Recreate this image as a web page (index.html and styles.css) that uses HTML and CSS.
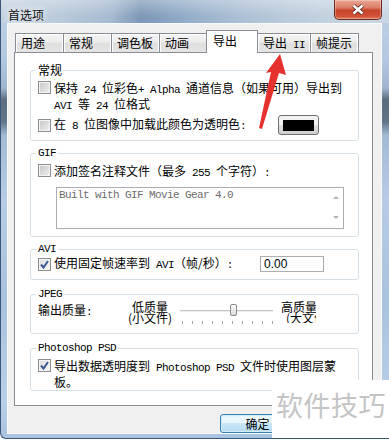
FILE: index.html
```html
<!DOCTYPE html>
<html lang="zh-CN">
<head>
  <meta charset="UTF-8">
  <meta name="viewport" content="width=device-width, initial-scale=1.0">
  <title>首选项</title>
  <link rel="stylesheet" href="styles.css">
</head>
<body>
  <div class="window">
    <div class="titlebar">
      <span class="title">首选项</span>
      <button class="close" aria-label="关闭">
        <svg width="14" height="11" viewBox="0 0 14 11">
          <path d="M2.5 1.5 L11.5 9.5 M11.5 1.5 L2.5 9.5" stroke="#5a2a22" stroke-width="4.2"/>
          <path d="M2.5 1.5 L11.5 9.5 M11.5 1.5 L2.5 9.5" stroke="#fff" stroke-width="2.4"/>
        </svg>
      </button>
    </div>

    <div class="client">
      <div class="tabs">
        <div class="tab">用途</div>
        <div class="tab">常规</div>
        <div class="tab">调色板</div>
        <div class="tab">动画</div>
        <div class="tab active">导出</div>
        <div class="tab">导出<span class="en"> II</span></div>
        <div class="tab">帧提示</div>
      </div>

      <div class="panel">
        <fieldset class="group">
          <legend>常规</legend>
          <div class="check-row">
            <span class="check"></span>
            <span>保持<span class="en"> 24 </span>位彩色<span class="en">+ Alpha </span>通道信息（如果可用）导出到<br><span class="en">AVI </span>等<span class="en"> 24 </span>位格式</span>
          </div>
          <div class="check-row center">
            <span class="check"></span>
            <span>在<span class="en"> 8 </span>位图像中加载此颜色为透明色<span class="en">:</span></span>
            <button class="swatch"><span></span></button>
          </div>
        </fieldset>

        <fieldset class="group group-gif">
          <legend class="en">GIF</legend>
          <div class="check-row">
            <span class="check"></span>
            <span>添加签名注释文件（最多<span class="en"> 255 </span>个字符）<span class="en">:</span></span>
          </div>
          <div class="memo">
            <div class="memo-text en">Built with GIF Movie Gear 4.0</div>
            <div class="memo-scroll">
              <i class="arr-up"></i>
              <i class="arr-down"></i>
            </div>
          </div>
        </fieldset>

        <fieldset class="group group-avi">
          <legend class="en">AVI</legend>
          <div class="check-row center">
            <span class="check on">
              <svg width="11" height="11" viewBox="0 0 11 11"><path d="M2 5.5 L4.5 8.5 L9 2" fill="none" stroke="#3d5a98" stroke-width="2"/></svg>
            </span>
            <span>使用固定帧速率到<span class="en"> AVI</span>（帧/秒）<span class="en">:</span></span>
            <input class="num" type="text" value="0.00">
          </div>
        </fieldset>

        <fieldset class="group group-jpeg">
          <legend class="en">JPEG</legend>
          <div class="quality">
            <span class="quality-title">输出质量<span class="en">:</span></span>
            <span class="level">低质量<br>(小文件)</span>
            <div class="slider">
              <div class="track"></div>
              <div class="ticks">
                <i></i><i></i><i></i><i></i><i></i><i></i><i></i><i></i><i></i><i></i>
              </div>
              <span class="thumb"></span>
            </div>
            <span class="level level-high">高质量<br><span class="sub">(大文件)</span></span>
          </div>
        </fieldset>

        <fieldset class="group group-psd">
          <legend class="en">Photoshop PSD</legend>
          <div class="check-row">
            <span class="check on">
              <svg width="11" height="11" viewBox="0 0 11 11"><path d="M2 5.5 L4.5 8.5 L9 2" fill="none" stroke="#3d5a98" stroke-width="2"/></svg>
            </span>
            <span>导出数据透明度到<span class="en"> Photoshop PSD </span>文件时使用图层蒙<br>板。</span>
          </div>
        </fieldset>
      </div>

      <div class="actions">
        <button class="btn default">确定</button>
        <button class="btn">取消</button>
      </div>
    </div>

    <div class="watermark">软件技巧</div>

    <svg class="arrow" width="389" height="441" viewBox="0 0 389 441">
      <polygon points="280,54 286,75 279,73 262,129 259,128 271,72 266,73" fill="#e5322f"/>
    </svg>
  </div>
</body>
</html>
```

FILE: styles.css
```css
* {
  box-sizing: border-box;
}

body {
  margin: 0;
  background: #fff;
  font-family: "Noto Sans CJK SC", "Noto Sans", sans-serif;
  font-size: 12px;
  color: #000;
}

.en {
  font-family: "Liberation Mono", monospace;
  font-size: 11px;
  letter-spacing: -0.6px;
}

/* window frame */

.window {
  position: relative;
  width: 389px;
  height: 439px;
  display: flex;
  flex-direction: column;
  padding: 0 7px 6px 6px;
  border-left: 1px solid #3b5779;
  border-bottom: 1px solid #3b5779;
  border-bottom-left-radius: 6px;
  overflow: hidden;
  background: linear-gradient(to bottom, #c0d2e6 0, #b2c8e0 60px, #9fb6ce 88px, #5a6c7e 100px, #62768a 122px, #a3bad3 135px, #b7cce4 200px, #a9c2de 300px, #b9cfe7 400px, #aac3e0 100%);
}

.titlebar {
  height: 28px;
  margin: 0 -7px 0 -6px;
  padding: 0 7px 0 7px;
  display: flex;
  justify-content: space-between;
  align-items: flex-start;
  background:
    linear-gradient(to bottom, rgba(255,255,255,0.3), rgba(255,255,255,0) 70%),
    linear-gradient(to right, #c4d2df 0, #b9cadb 60px, #a6bad0 110px, #7d97b7 140px, #8ea8c6 175px, #a2b8d0 215px, #b3c5d8 260px, #c2d1df 320px, #c9d6e3 100%);
}

.title {
  margin-top: 7px;
  line-height: 16px;
  color: #111;
  text-shadow: 0 0 6px #fff, 0 0 10px rgba(255,255,255,0.8);
}

.close {
  width: 48px;
  height: 20px;
  padding: 0;
  border: 1px solid #6d2a21;
  border-top: 0;
  border-radius: 0 0 5px 5px;
  background: linear-gradient(#e8a694, #dc7d66 40%, #c7432a 55%, #cf5236 85%, #e07a5c);
  box-shadow: inset 0 0 0 1px rgba(255,255,255,0.3);
  display: flex;
  align-items: center;
  justify-content: center;
}

.client {
  flex: 1;
  display: flex;
  flex-direction: column;
  background: #f0f0f0;
  border: 1px solid #f7f9fb;
  padding: 6px 8px 0 6px;
}

/* tabs */

.tabs {
  display: flex;
  align-items: flex-end;
  height: 23px;
  margin: 0 0 -1px 1px;
  position: relative;
  z-index: 1;
}

.tab {
  height: 19px;
  min-width: 49px;
  margin: 0 0 1px -1px;
  padding: 0 5px;
  border: 1px solid #898c95;
  border-bottom: 0;
  line-height: 18px;
  white-space: nowrap;
  background: linear-gradient(#f4f4f4, #ececec 45%, #dfdfdf 50%, #e4e4e4);
  box-shadow: inset 1px 1px #fff, inset -1px 0 #fff;
}

.tab:first-child {
  margin-left: 0;
}

.tab.active {
  height: 23px;
  min-width: 52px;
  margin: 0 0 0 -2px;
  padding: 1px 6px 0;
  line-height: 17px;
  background: #fff;
  box-shadow: none;
  position: relative;
  z-index: 1;
}

/* panel and groups */

.panel {
  background: #fff;
  border: 1px solid #898c95;
  padding: 11px 13px 14px 15px;
}

.group {
  margin: 0;
  padding: 5px 7px;
  min-width: 0;
  border: 1px solid #d5dfe5;
  border-radius: 3px;
}

.group + .group {
  margin-top: 6px;
}

.group legend {
  margin-left: -2px;
  padding: 0 2px;
  line-height: 12px;
}

.group-gif {
  padding-bottom: 7px;
}

.group-avi {
  padding-top: 1px;
  padding-bottom: 7px;
}

.group.group-jpeg {
  margin-top: 8px;
  padding-top: 0;
  padding-bottom: 9px;
}

.group.group-psd {
  margin-top: 8px;
  padding-bottom: 2px;
}

.check-row {
  display: flex;
  align-items: flex-start;
  gap: 3px;
  line-height: 13px;
  white-space: nowrap;
}

.check-row + .check-row {
  margin-top: 2px;
}

.check-row.center {
  align-items: center;
}

.check {
  flex: none;
  width: 13px;
  height: 13px;
  border: 1px solid #8e8f8f;
  background: linear-gradient(135deg, #c6c6c6, #f0f0f0);
  box-shadow: inset 0 0 0 1px #f4f4f4;
}

.check.on {
  background: linear-gradient(135deg, #dcdcdc, #fafafa);
}

.check svg {
  display: block;
}

.swatch {
  margin: 0 32px 0 auto;
  width: 41px;
  height: 20px;
  padding: 4px 4px 3px;
  border: 1px solid #707070;
  border-radius: 3px;
  background: linear-gradient(#f2f2f2 50%, #dddddd 50%, #cfcfcf);
}

.swatch span {
  display: block;
  height: 11px;
  background: #000;
}

.memo {
  display: flex;
  width: 288px;
  height: 42px;
  margin: 7px 0 0 18px;
  border: 1px solid #abadb3;
  background: #fff;
  color: #6d6d6d;
}

.memo-text {
  flex: 1;
  padding: 1px 2px;
  line-height: 13px;
}

.memo-scroll {
  width: 15px;
  display: flex;
  flex-direction: column;
  justify-content: space-between;
  align-items: center;
  padding: 8px 0 9px;
}

.arr-up,
.arr-down {
  width: 0;
  height: 0;
  border-left: 3px solid transparent;
  border-right: 3px solid transparent;
}

.arr-up {
  border-bottom: 3px solid #b4b4b4;
}

.arr-down {
  border-top: 3px solid #b4b4b4;
}

.num {
  margin: 0 27px 0 auto;
  width: 64px;
  height: 16px;
  padding: 0 3px;
  border: 1px solid #abadb3;
  font: 12px "Liberation Sans", sans-serif;
  color: #000;
}

/* jpeg quality */

.quality {
  display: flex;
  align-items: flex-start;
}

.quality-title {
  width: 90px;
  margin-top: 3px;
  line-height: 13px;
}

.level {
  width: 44px;
  padding-top: 1px;
  line-height: 11px;
  text-align: center;
  white-space: nowrap;
}

.level-high {
  width: 35px;
  margin-left: 8px;
  overflow: hidden;
  text-align: left;
}

.level-high .sub {
  padding-left: 5px;
}

.slider {
  position: relative;
  width: 93px;
  height: 24px;
  margin-left: 8px;
}

.track {
  margin-top: 10px;
  height: 2px;
  background: #c3c3c3;
  border-bottom: 1px solid #ececec;
}

.ticks {
  display: flex;
  justify-content: space-between;
  margin-top: 9px;
  padding-left: 2px;
}

.ticks i {
  width: 1px;
  height: 3px;
  background: #a6a6a6;
}

.thumb {
  position: absolute;
  left: 50px;
  top: 4px;
  width: 7px;
  height: 12px;
  border: 1px solid #8a8a8a;
  border-radius: 2px;
  background: linear-gradient(#fdfdfd, #d8d8d8);
}

/* dialog buttons */

.actions {
  display: flex;
  justify-content: flex-end;
  gap: 3px;
  margin-top: 8px;
}

.btn {
  width: 75px;
  height: 19px;
  padding: 0;
  border: 1px solid #707070;
  border-radius: 3px;
  font: inherit;
  line-height: 17px;
  background: linear-gradient(#f2f2f2 50%, #dddddd 50%, #cfcfcf);
}

.btn.default {
  border-color: #3c7fb1;
  background: linear-gradient(#eaf6fd 50%, #c9e8f9 50%, #b4dcf3);
  box-shadow: inset 0 0 0 1px #d4ecfa;
}

/* overlays */

.watermark {
  position: absolute;
  right: 0;
  bottom: -2px;
  width: 117px;
  height: 60px;
  padding: 10px 0 0 4px;
  background: #fff;
  color: #c4c4c4;
  font-size: 27px;
  line-height: 30px;
  letter-spacing: 0.5px;
  white-space: nowrap;
}

.arrow {
  position: absolute;
  left: -1px;
  top: 0;
  pointer-events: none;
}
```
